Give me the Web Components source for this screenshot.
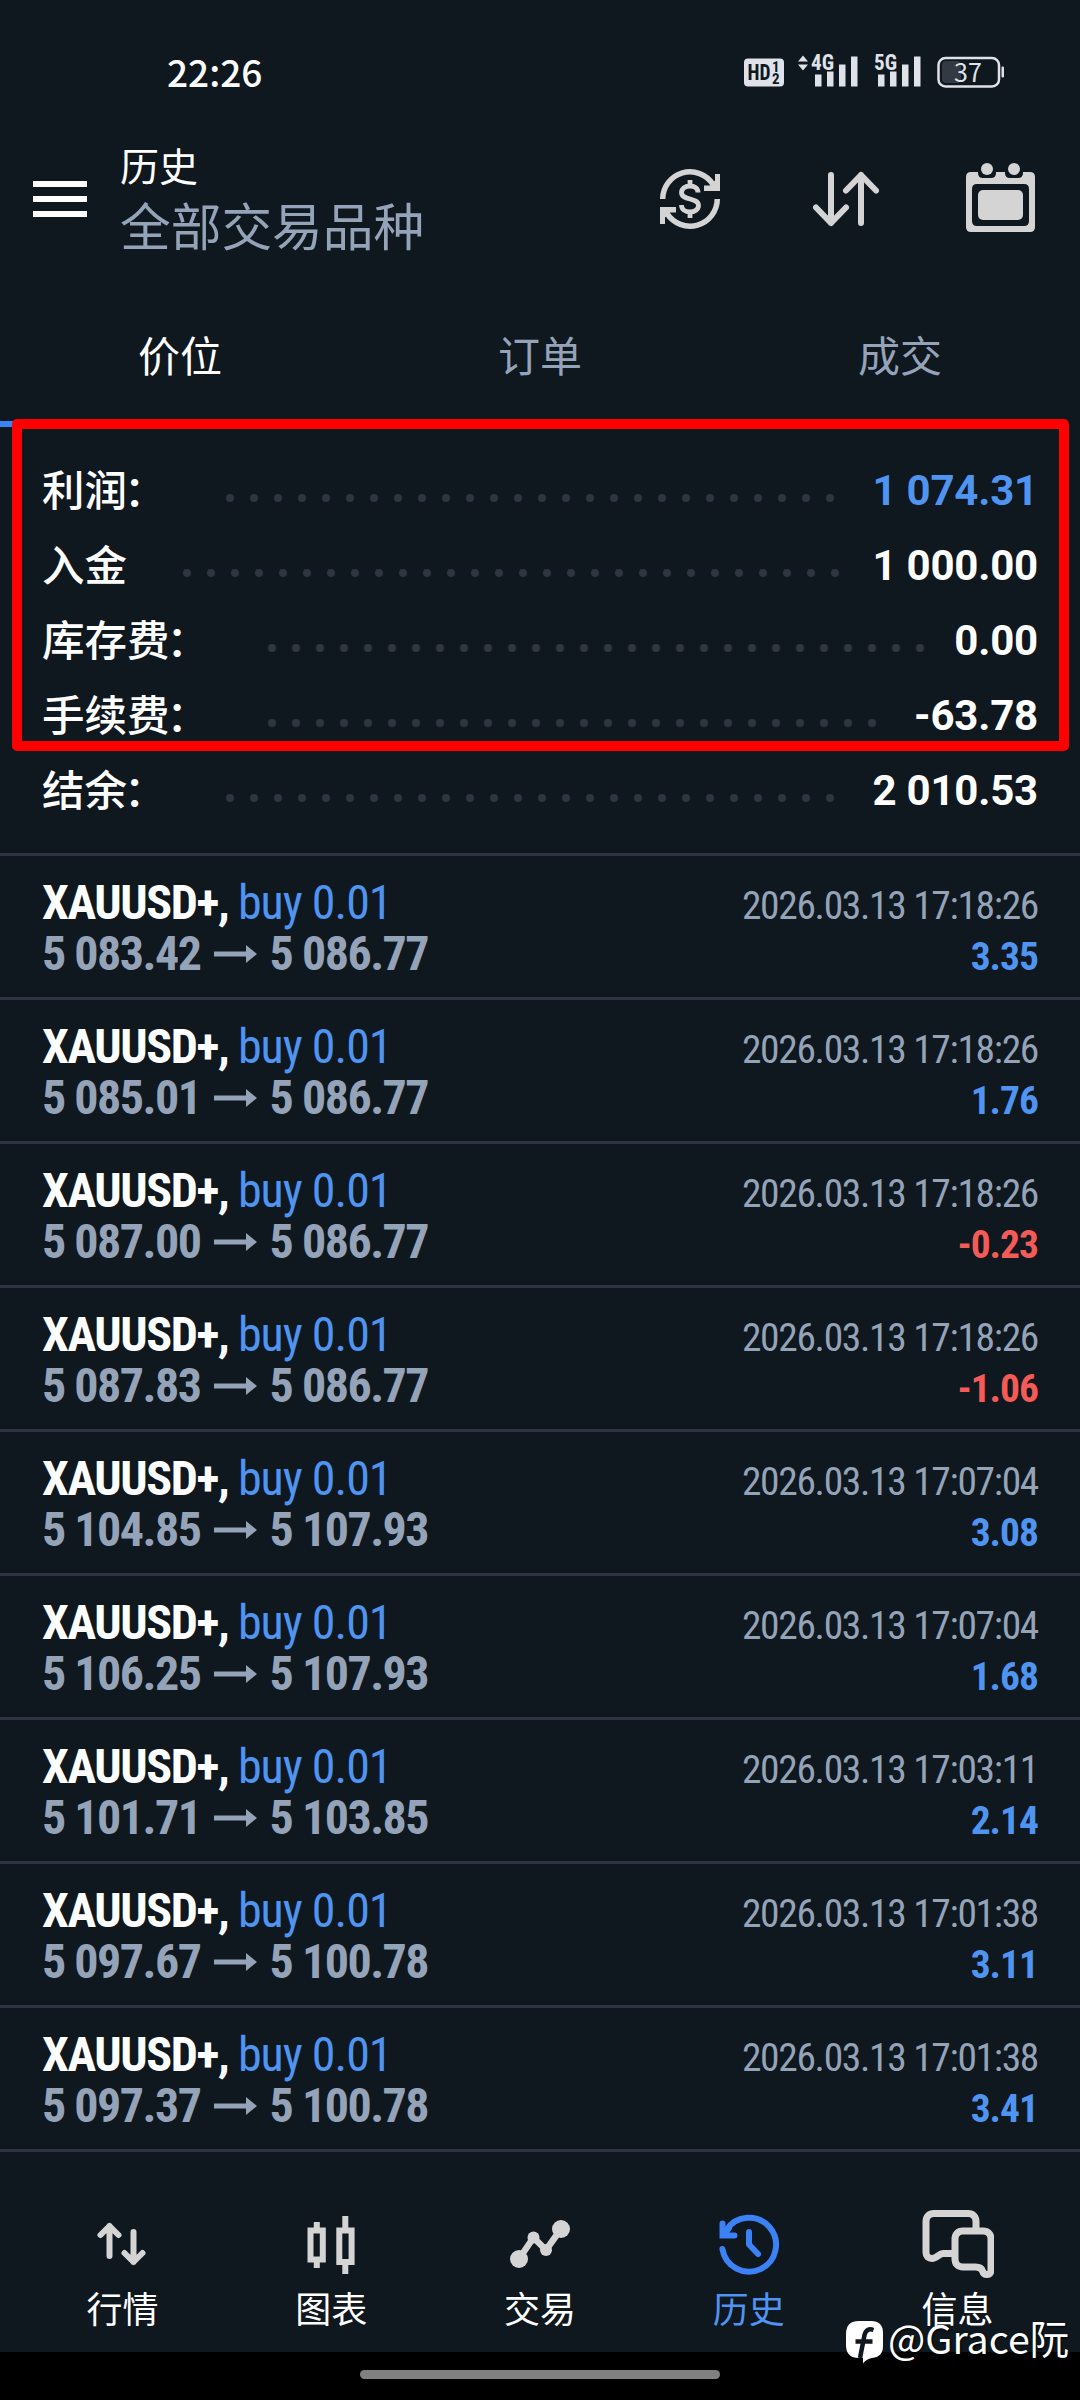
<!DOCTYPE html>
<html lang="zh-CN">
<head>
<meta charset="utf-8">
<title>历史</title>
<style>
  body {
    margin: 0;
    width: 1080px;
    height: 2400px;
    overflow: hidden;
    background: #000;
    font-family: Roboto, "Noto Sans CJK SC", sans-serif;
    --bg: #0f171f;
    --muted: #94a3b8;
    --line: #2e3443;
    --blue: #4e94f0;
    --accent: #3b82f6;
    --red: #f55b56;
    --icon: #d4d4d4;
  }
</style>
</head>
<body>
<history-app></history-app>
<script>
(function () {
  "use strict";

  var CJK = '"Noto Sans CJK SC", sans-serif';
  var COND = '"Roboto Condensed", Roboto, sans-serif';

  // label, has colon, value, tone
  var summary = [
    ["利润", true, "1 074.31", "blue"],
    ["入金", false, "1 000.00", ""],
    ["库存费", true, "0.00", ""],
    ["手续费", true, "-63.78", ""],
    ["结余", true, "2 010.53", ""],
  ];

  var deals = [
    ["5 083.42", "5 086.77", "17:18:26", "3.35"],
    ["5 085.01", "5 086.77", "17:18:26", "1.76"],
    ["5 087.00", "5 086.77", "17:18:26", "-0.23"],
    ["5 087.83", "5 086.77", "17:18:26", "-1.06"],
    ["5 104.85", "5 107.93", "17:07:04", "3.08"],
    ["5 106.25", "5 107.93", "17:07:04", "1.68"],
    ["5 101.71", "5 103.85", "17:03:11", "2.14"],
    ["5 097.67", "5 100.78", "17:01:38", "3.11"],
    ["5 097.37", "5 100.78", "17:01:38", "3.41"],
  ];

  // stroke icons use currentColor, the box is 72x78
  var icons = {
    quotes:
      '<g fill="none" stroke="currentColor" stroke-width="6" stroke-linecap="round" stroke-linejoin="round"><path d="M23.500 51V21M14.500 30l9-9 9 9"/><path d="M47.500 27v30M38.500 48l9 9 9-9"/></g>',
    chart:
      '<g fill="none" stroke="currentColor" stroke-width="6"><path d="M15.500 25.500h12.300v29H15.500zM44.300 25.500h12.300v31.500H44.300z"/><path d="M21.800 17v6M21.800 57v6M50.300 11v12M50.300 59v10"/></g>',
    trade:
      '<g fill="currentColor"><circle cx="15" cy="54" r="9"/><circle cx="29.500" cy="32.500" r="6"/><circle cx="42" cy="45" r="6"/><circle cx="57" cy="24" r="9"/></g><path d="M15 54l14.500-21.500L42 45l15-21" fill="none" stroke="currentColor" stroke-width="6.500"/>',
    history:
      '<g fill="none" stroke="currentColor" stroke-width="6" stroke-linecap="round"><path d="M9.400 44a27 27 0 1 0 4-19"/><path d="M9.500 18.500v12h12M11 29l5-6"/><path d="M36 27v12.500l9 9.500" stroke-linejoin="round"/></g>',
    message:
      '<g fill="none" stroke="currentColor" stroke-width="7" stroke-linejoin="round"><path d="M30 48.500h-9c-4 0-6 5-11 5-3.500 0-6-2-6-6v-31c0-5 3-8 8-8h34c5 0 8 3 8 8V26"/><path d="M41 26h20c5 0 8 3 8 8v31.500c0 5-7 5.500-8.500.500-1-3-3-4-7-4H41c-5 0-8-3-8-8V34c0-5 3-8 8-8z"/></g>',
  };

  function define(name, render) {
    customElements.define(
      name,
      class extends HTMLElement {
        constructor() {
          super();
          this.attachShadow({ mode: "open" });
        }
        connectedCallback() {
          this.shadowRoot.innerHTML = render(this);
        }
      }
    );
  }

  define("status-bar", function () {
    return (
      "<style>:host{display:flex;height:146px;align-items:center;justify-content:space-between;padding:0 76px 3px 167px;box-sizing:border-box;color:#fff}" +
      ".time{font:500 37px/50px " + CJK + ";padding-bottom:2px}svg{display:block;overflow:visible}text{font-family:" + COND + ";font-stretch:75%}</style>" +
      '<span class="time">22:26</span>' +
      '<svg width="261" height="52" viewBox="0 -7.500 261 52" fill="#dfe2e8">' +
      '<rect x="1" y="5" width="40" height="28" rx="4"/>' +
      '<g fill="#0f171f" font-weight="700"><text x="4.500" y="26.500" font-size="22" textLength="23" lengthAdjust="spacingAndGlyphs">HD</text><text x="29" y="18.500" font-size="15">1</text><text x="29" y="30.500" font-size="15">2</text></g>' +
      '<path d="M55 8l5-6 5 6zM55 11h10l-5 6z"/>' +
      '<g font-weight="700" font-size="22"><text x="68" y="16.500" textLength="23" lengthAdjust="spacingAndGlyphs">4G</text><text x="131" y="16.500" textLength="23" lengthAdjust="spacingAndGlyphs">5G</text></g>' +
      '<path d="M72 21h6.500v12H72zM84 18h6.500v15H84zM96 11h6.500v22H96zM108 3h6.500v30H108zM135 21h6.500v12H135zM147 18h6.500v15H147zM159 11h6.500v22H159zM171 3h6.500v30H171z"/>' +
      '<rect x="199" y="7.500" width="19" height="22" rx="4" fill="#343a43"/>' +
      '<rect x="195.500" y="4.500" width="60.500" height="28.500" rx="7" fill="none" stroke="#dfe2e8" stroke-width="2.500"/><rect x="258.500" y="13" width="2.500" height="11" rx="1"/>' +
      '<text x="225" y="28" text-anchor="middle" style="font:400 25px ' + "'Noto Sans CJK SC'" + '">37</text>' +
      "</svg>"
    );
  });

  define("app-header", function () {
    return (
      "<style>:host{display:flex;height:138px;align-items:flex-start;padding:0 42px 0 33px;box-sizing:border-box}" +
      ".menu{display:flex;flex-direction:column;gap:9px;width:54px;padding-top:35px;margin-right:33px}.menu i{height:6px;background:#fff}" +
      ".titles{flex:1;margin-top:-2px;font-family:" + CJK + "}h1{margin:0;font-size:39px;line-height:40px;font-weight:400;color:#fff}" +
      "p{margin:0;font-size:50.700px;line-height:60px;padding-top:10px;color:var(--muted)}" +
      ".tools{display:flex;align-items:center;gap:84px;padding-top:14px;color:var(--icon)}svg{display:block}</style>" +
      '<div class="menu"><i></i><i></i><i></i></div>' +
      '<div class="titles"><h1>历史</h1><p>全部交易品种</p></div>' +
      '<div class="tools">' +
      '<svg width="72" height="78" viewBox="0 0 72 78" fill="none" stroke="currentColor" stroke-width="5.500"><path d="M8.700 39A27.300 27.300 0 0 1 59 24.500M63.300 39A27.300 27.300 0 0 1 13 53.500"/><path fill="currentColor" stroke="none" d="M66 14v17H50v-5.500h6l5-5V14zM6 64V47h16v5.500h-6l-5 5V64z"/><path d="M44 32.500c0-4-3.500-6.500-8-6.500s-8.500 2.500-8.500 6.500c0 8.500 17 4.500 17 13 0 4-4 6.500-8.500 6.500s-8.500-2.500-8.500-7M36 20v6M36 52v6" stroke-width="4.800"/></svg>' +
      '<svg width="72" height="78" viewBox="0 0 72 78" fill="none" stroke="currentColor" stroke-width="6" stroke-linecap="round" stroke-linejoin="round"><path d="M21 15v48M6 47.500L21 63l15-15.500M51 63V15M36 30.500L51 15l15 15.500"/></svg>' +
      '<svg width="72" height="78" viewBox="3 0 72 78" fill="currentColor"><path fill-rule="evenodd" d="M8 12h7v1q0 5 5 5h8q5 0 5-5v-1h9v1q0 5 5 5h8q5 0 5-5v-1h7q5 0 5 5v50q0 5-5 5H8q-5 0-5-5V17q0-5 5-5zM14 24q-5 0-5 5v32q0 5 5 5h47q5 0 5-5V29q0-5-5-5z"/><rect x="15" y="30" width="45" height="30" rx="5"/><circle cx="24" cy="9" r="6"/><circle cx="51" cy="9" r="6"/></svg>' +
      "</div>"
    );
  });

  define("tab-bar", function () {
    return (
      "<style>:host{display:flex;height:143px;font:42px/140px " + CJK + ";color:var(--muted)}" +
      "div{flex:1;text-align:center;box-sizing:border-box;border-bottom:6px solid transparent}.on{color:#fff;border-color:var(--accent)}</style>" +
      '<div class="on">价位</div><div>订单</div><div>成交</div>'
    );
  });

  define("summary-row", function (el) {
    return (
      "<style>:host{display:flex;height:75px;align-items:center;color:#fff}" +
      ".label{font:500 42.500px/70px " + CJK + ";height:75px}.colon{margin:0 3px 0 -3px}" +
      ".dots{flex:1;display:flex;flex-wrap:wrap;align-content:flex-start;height:8px;overflow:hidden;margin:14px 18px 0 48px}" +
      ".dots i{flex:none;width:8px;height:8px;margin:0 8px;border-radius:4px;background:#2f3642}" +
      ".value{font:700 42px/75px Roboto,sans-serif;letter-spacing:-0.200px}.blue{color:var(--blue)}</style>" +
      '<span class="label"><slot></slot>' +
      (el.hasAttribute("colon") ? '<span class="colon">：</span>' : "") +
      '</span><span class="dots">' +
      "<i></i>".repeat(36) +
      '</span><span class="value ' + (el.getAttribute("tone") || "") + '">' + el.getAttribute("value") + "</span>"
    );
  });

  define("deal-row", function (el) {
    var profit = el.getAttribute("profit");
    return (
      "<style>:host{display:flex;justify-content:space-between;height:144px;padding:21px 42px 0 42px;box-sizing:border-box;border-bottom:3px solid var(--line);font-family:" + COND + ";font-stretch:75%}" +
      ".l,.r{display:flex;flex-direction:column}.r{align-items:flex-end}" +
      ".l>div{font-size:48px;line-height:51px;white-space:nowrap;letter-spacing:-1.400px}.top{color:#fff}.top span{color:var(--blue);letter-spacing:-1px}.l>.price{display:flex;align-items:center;font-weight:700;color:var(--muted);letter-spacing:-1.500px}" +
      ".r>div{font-size:39.500px;line-height:51px;padding-top:3px;height:48px;letter-spacing:-1.330px}.date{color:var(--muted)}.r>.up{color:var(--blue);letter-spacing:-1px}.r>.down{color:var(--red);letter-spacing:-1px}svg{margin:0 13px}</style>" +
      '<div class="l"><div class="top"><b>XAUUSD+,</b> <span>buy 0.01</span></div>' +
      '<div class="price">' + el.getAttribute("from") +
      '<svg width="43" height="18" viewBox="0 0 43 18" fill="currentColor"><path d="M0 6.500h32V0l11 9-11 9v-6.500H0z"/></svg>' +
      el.getAttribute("to") + "</div></div>" +
      '<div class="r"><div class="date">2026.03.13 ' + el.getAttribute("time") + "</div>" +
      '<div class="' + (profit[0] === "-" ? "down" : "up") + '"><b>' + profit + "</b></div></div>"
    );
  });

  define("nav-item", function (el) {
    return (
      "<style>:host{flex:1;display:flex;flex-direction:column;align-items:center;color:var(--icon)}:host([active]){color:var(--accent)}" +
      "svg{display:block}span{font:36px/42px " + CJK + ";color:#fff;margin-top:3px}:host([active]) span{color:var(--blue)}</style>" +
      '<svg width="72" height="78" viewBox="0 0 72 78">' + icons[el.getAttribute("icon")] + "</svg><span><slot></slot></span>"
    );
  });

  define("water-mark", function () {
    return (
      "<style>:host{display:flex;align-items:center;gap:4px;color:#fff;font:39.400px/44px " + CJK + ";text-shadow:1px 1px 2px #000}svg{display:block}span{margin-top:-10px;white-space:nowrap}</style>" +
      '<svg width="38" height="44" viewBox="0 0 38 44"><path fill="#fff" d="M13 1h12q12 0 12 12v13q0 11-11 12-6 1-9 5.500V38h-4Q0 38 0 25V14Q0 1 13 1z"/><path d="M27.500 10q-7-2.500-9 5L14 38M9.500 21.500h17" fill="none" stroke="#0f171f" stroke-width="4.500"/></svg>' +
      "<span>@Grace阮</span>"
    );
  });

  define("history-app", function () {
    var html =
      "<style>:host{display:block;position:relative;width:1080px;height:2400px}" +
      ".screen{height:2352px;background:var(--bg);display:flex;flex-direction:column}" +
      ".summary{padding:26px 42px 25px;border-bottom:3px solid var(--line)}" +
      "nav{display:flex;padding:53px 18px 0}" +
      ".home{width:360px;height:9px;margin:18px auto 0;border-radius:5px;background:#808080}" +
      ".frame{position:absolute;left:12px;top:419px;width:1057px;height:332px;box-sizing:border-box;border:10px solid #fe0000;border-radius:5px}" +
      "water-mark{position:absolute;left:846px;top:2320px}</style>" +
      '<div class="screen"><status-bar></status-bar><app-header></app-header><tab-bar></tab-bar><div class="summary">';
    summary.forEach(function (s) {
      html +=
        "<summary-row" + (s[1] ? " colon" : "") + ' value="' + s[2] + '" tone="' + s[3] + '">' + s[0] + "</summary-row>";
    });
    html += "</div>";
    deals.forEach(function (d) {
      html +=
        '<deal-row from="' + d[0] + '" to="' + d[1] + '" time="' + d[2] + '" profit="' + d[3] + '"></deal-row>';
    });
    html +=
      '<nav><nav-item icon="quotes">行情</nav-item><nav-item icon="chart">图表</nav-item><nav-item icon="trade">交易</nav-item>' +
      '<nav-item icon="history" active>历史</nav-item><nav-item icon="message">信息</nav-item></nav></div>' +
      '<div class="home"></div><div class="frame"></div><water-mark></water-mark>';
    return html;
  });
})();
</script>
</body>
</html>
